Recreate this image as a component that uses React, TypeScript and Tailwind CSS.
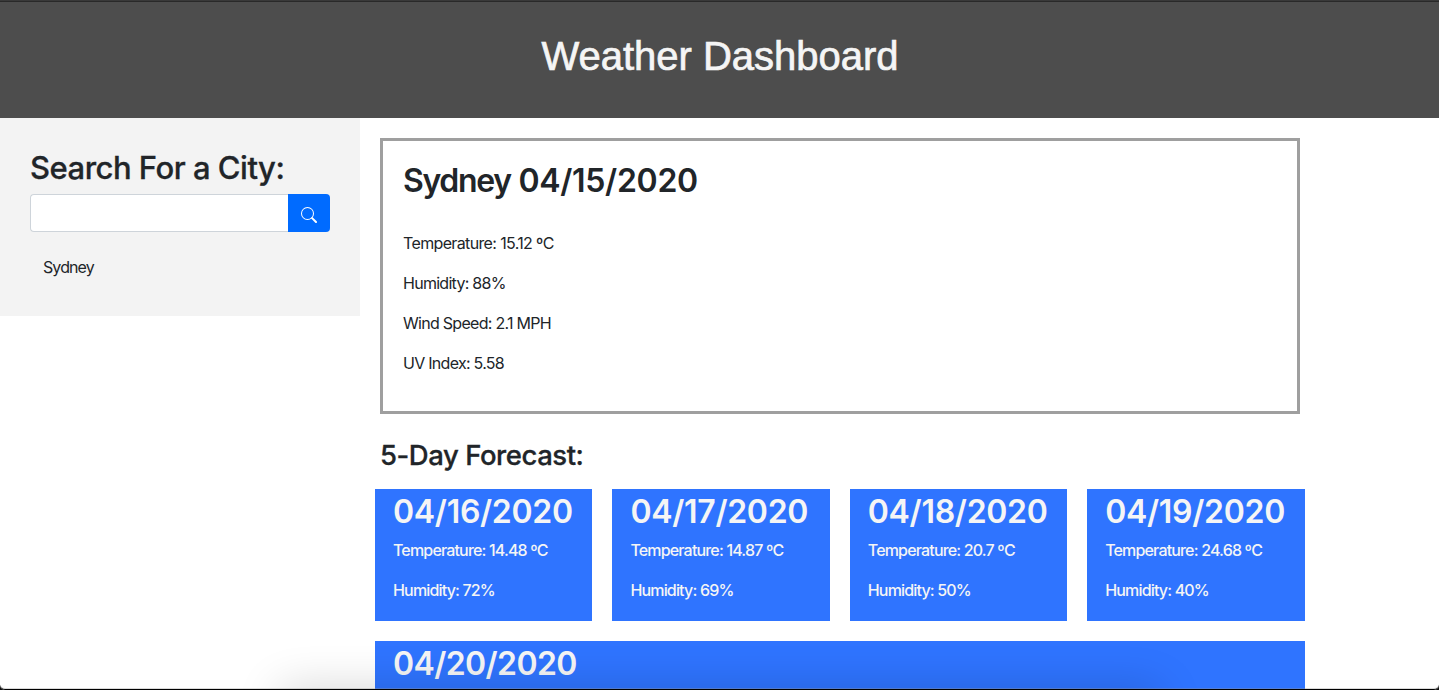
type Day = { date: string; temperature?: string; humidity?: number };

const forecast: Day[] = [
  { date: "04/16/2020", temperature: "14.48", humidity: 72 },
  { date: "04/17/2020", temperature: "14.87", humidity: 69 },
  { date: "04/18/2020", temperature: "20.7", humidity: 50 },
  { date: "04/19/2020", temperature: "24.68", humidity: 40 },
  { date: "04/20/2020" },
];

function SearchIcon() {
  return (
    <svg width="16" height="16" viewBox="0 0 16 16" fill="currentColor" aria-hidden="true">
      <path
        fillRule="evenodd"
        d="M10.442 10.442a1 1 0 0 1 1.415 0l3.85 3.85a1 1 0 0 1-1.414 1.415l-3.85-3.85a1 1 0 0 1 0-1.415z"
      />
      <path
        fillRule="evenodd"
        d="M6.5 12a5.500 5.500 0 1 0 0-11 5.500 5.500 0 0 0 0 11zM13 6.500a6.500 6.500 0 1 1-13 0 6.500 6.500 0 0 1 13 0z"
      />
    </svg>
  );
}

function Header() {
  return (
    <header className="h-[118px] border-t border-[#393939] bg-[#4d4d4d] text-center">
      <div className="border-t border-[#292929] pt-[30px] pl-px">
        <h1 className="font-['Liberation_Sans',sans-serif] text-[40px] leading-[48px] tracking-[-0.02px] text-[#f5f5f5] [-webkit-text-stroke:0.7px_#f5f5f5]">
          Weather Dashboard
        </h1>
      </div>
    </header>
  );
}

function SearchPanel() {
  return (
    <aside className="h-[198px] w-[360px] shrink-0 bg-[#f3f3f3] px-[30px] pt-[31px]">
      <h2 className="mb-[7px] text-[31px] leading-[38px] font-medium tracking-[-0.5px] whitespace-nowrap [-webkit-text-stroke:0.3px_#212529]">
        Search For a City:
      </h2>
      <form className="flex h-[38px]" onSubmit={(e) => e.preventDefault()}>
        <input
          aria-label="City"
          className="min-w-0 flex-1 rounded-l border border-r-0 border-[#ced4da] bg-white px-3 outline-none"
        />
        <button
          type="submit"
          aria-label="Search"
          className="flex w-[42px] items-center justify-center rounded-r bg-[#006bff] pt-1 text-white"
        >
          <SearchIcon />
        </button>
      </form>
      <p className="mt-[23px] ml-[13px] tracking-[-0.9px]">Sydney</p>
    </aside>
  );
}

function Current() {
  return (
    <section className="mx-[5px] h-[276px] border-[3px] border-[#9f9f9f] px-5 pt-[21px]">
      <h2 className="mb-[31px] text-[32px] leading-[38.4px] font-semibold tracking-[-0.3px]">
        <span className="tracking-[-1.35px]">Sydney</span> 04/15/2020
      </h2>
      <div className="flex flex-col gap-4 tracking-[-0.72px]">
        <p className="tracking-[-0.64px]">Temperature: 15.12 ºC</p>
        <p>Humidity: 88%</p>
        <p>Wind Speed: 2.1 MPH</p>
        <p>UV Index: 5.58</p>
      </div>
    </section>
  );
}

export default function App() {
  return (
    <div className="relative h-[690px] overflow-hidden bg-white font-['Inter',sans-serif] text-base leading-6 text-[#212529]">
      <Header />
      <main className="flex items-start">
        <SearchPanel />
        <div className="ml-[15px] w-[929.8px] pt-5">
          <Current />
          <h3 className="mt-6 mb-[17px] ml-[5px] text-[27.5px] leading-[34px] font-medium tracking-[-0.45px] [-webkit-text-stroke:0.3px_#212529]">
            5-Day Forecast:
          </h3>
          <div className="flex flex-wrap gap-5">
            {forecast.map((day) => (
              <article
                key={day.date}
                className="h-[132px] w-[217.4px] bg-[#2f74ff] pt-1 pl-[18px] tracking-[-0.3px] text-[#f5f5f5] last:w-full last:tracking-[-0.6px]"
              >
                <h2 className="mb-[7px] text-[32px] leading-[38.4px] font-semibold whitespace-nowrap">
                  {day.date}
                </h2>
                {day.temperature && (
                  <div className="flex flex-col gap-4 font-[450] tracking-[-0.83px]">
                    <p>Temperature: {day.temperature} ºC</p>
                    <p>Humidity: {day.humidity}%</p>
                  </div>
                )}
              </article>
            ))}
          </div>
        </div>
      </main>
      <div className="pointer-events-none absolute -bottom-[30px] left-[280px] h-[30px] w-[880px] shadow-[0_0_46px_rgba(0,0,0,0.2)]" />
      <div className="pointer-events-none absolute inset-0 rounded-b-[5px] border-b border-black shadow-[0_0_0_5px_#111,inset_0_-1px_0_rgba(150,150,150,0.35)]" />
    </div>
  );
}
